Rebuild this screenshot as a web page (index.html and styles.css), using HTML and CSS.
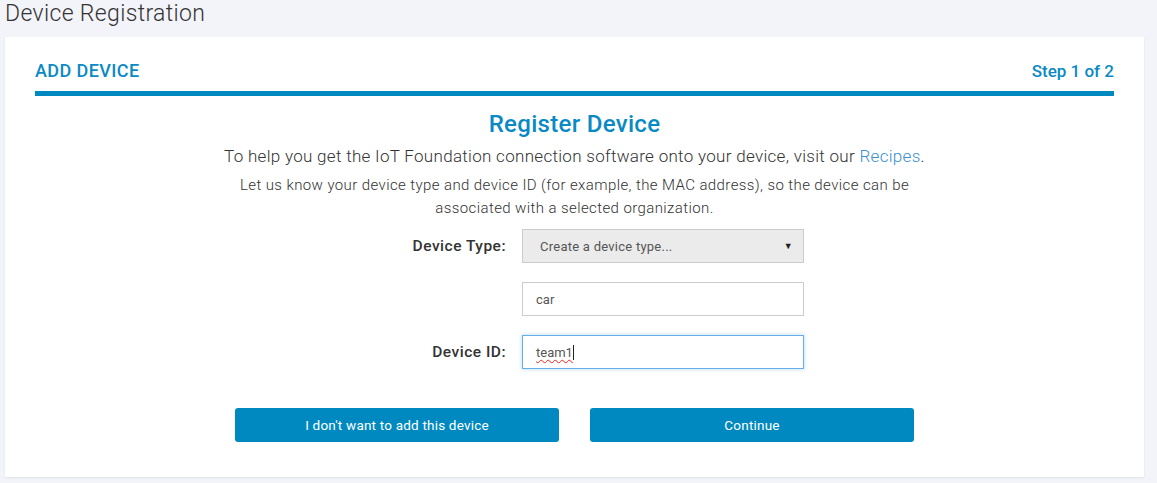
FILE: index.html
```html
<!DOCTYPE html>
<html>
<head>
<meta charset="utf-8">
<link rel="stylesheet" href="styles.css">
</head>
<body>
<h1 class="page-title">Device Registration</h1>
<div class="card">
  <div class="card-head">
    <span class="head-left">ADD DEVICE</span>
    <span class="head-right">Step 1 of 2</span>
  </div>
  <div class="card-body">
    <h2 class="reg-title">Register Device</h2>
    <p class="lead">To help you get the IoT Foundation connection software onto your device, visit our <a class="link" href="#">Recipes</a>.</p>
    <p class="note">Let us know your device type and device ID (for example, the MAC address), so the device can be<br>associated with a selected organization.</p>
    <div class="form">
      <div class="row">
        <label class="lbl">Device Type:</label>
        <div class="select"><span>Create a device type...</span><span class="caret">&#9660;</span></div>
      </div>
      <div class="row">
        <span class="lbl"></span>
        <div class="input">car</div>
      </div>
      <div class="row">
        <label class="lbl">Device ID:</label>
        <div class="input focus"><span class="spell">team1</span><span class="cursor"></span></div>
      </div>
    </div>
    <div class="buttons">
      <button class="btn">I don't want to add this device</button>
      <button class="btn">Continue</button>
    </div>
  </div>
</div>
</body>
</html>
```
FILE: styles.css
```css
html, body {
  margin: 0;
  padding: 0;
}
body {
  background: #f3f4f9;
  font-family: Roboto, "Liberation Sans", sans-serif;
  color: #323232;
  width: 1157px;
  height: 483px;
  overflow: hidden;
}
.page-title {
  margin: 0;
  padding: 1px 0 0 5px;
  height: 36px;
  font-size: 23px;
  font-weight: 300;
  letter-spacing: 0.35px;
  color: #333;
  line-height: 26px;
}
.card {
  margin-left: 5px;
  width: 1139px;
  height: 440px;
  background: #fff;
  box-shadow: 0 1px 2px rgba(0,0,0,0.08);
  padding: 0 30px;
  box-sizing: border-box;
}
.card-head {
  display: flex;
  justify-content: space-between;
  align-items: flex-end;
  height: 49px;
  padding-bottom: 5px;
  border-bottom: 5px solid #0089c1;
  box-sizing: content-box;
  color: #0a8ac4;
  font-size: 17px;
  font-weight: 500;
  line-height: 20px;
}
.card-head span { position: relative; top: -5px; }
.head-left { font-size: 18px; letter-spacing: 0.4px; }
.card-body {
  text-align: center;
}
.reg-title {
  margin: 14px 0 0;
  font-size: 24px;
  font-weight: 500;
  letter-spacing: 0.3px;
  color: #0a8ac4;
  line-height: 28px;
}
.lead {
  margin: 8px 0 0;
  font-size: 17px;
  font-weight: 300;
  letter-spacing: 0.3px;
  line-height: 20px;
  color: #333;
}
.link { color: #3b8fd0; text-decoration: none; }
.note {
  margin: 8px 0 0;
  font-size: 15px;
  font-weight: 300;
  letter-spacing: 0.4px;
  line-height: 23px;
  color: #333;
}
.form {
  margin-top: 9px;
  display: flex;
  flex-direction: column;
  gap: 19px;
}
.row {
  display: flex;
  align-items: center;
  gap: 16px;
}
.lbl {
  width: 471px;
  text-align: right;
  font-size: 15.5px;
  font-weight: 500;
  letter-spacing: 0.5px;
  color: #333;
}
.select, .input {
  width: 282px;
  height: 34px;
  box-sizing: border-box;
  border: 1px solid #ccc;
  display: flex;
  align-items: center;
  padding: 0 10px 0 17px;
  font-size: 13px;
  color: #555;
  text-align: left;
}
.select {
  background: #ebebeb;
  justify-content: space-between;
  letter-spacing: 0.25px;
}
.caret { font-size: 9px; color: #222; }
.input { background: #fff; padding-left: 13px; }
.input.focus {
  border-color: #66afe9;
  box-shadow: 0 0 4px rgba(102,175,233,0.5);
}
.spell {
  text-decoration: underline wavy #e22;
  text-decoration-thickness: 1px;
  text-underline-offset: 2px;
}
.cursor {
  display: inline-block;
  width: 1px;
  height: 15px;
  background: #222;
}
.buttons {
  margin-top: 39px;
  display: flex;
  justify-content: center;
  gap: 31px;
}
.btn {
  width: 324px;
  height: 34px;
  border: 0;
  border-radius: 3px;
  background: #0089c1;
  color: #fff;
  font-family: Roboto, "Liberation Sans", sans-serif;
  font-size: 13.5px;
  font-weight: 400;
  letter-spacing: 0.2px;
}
```
